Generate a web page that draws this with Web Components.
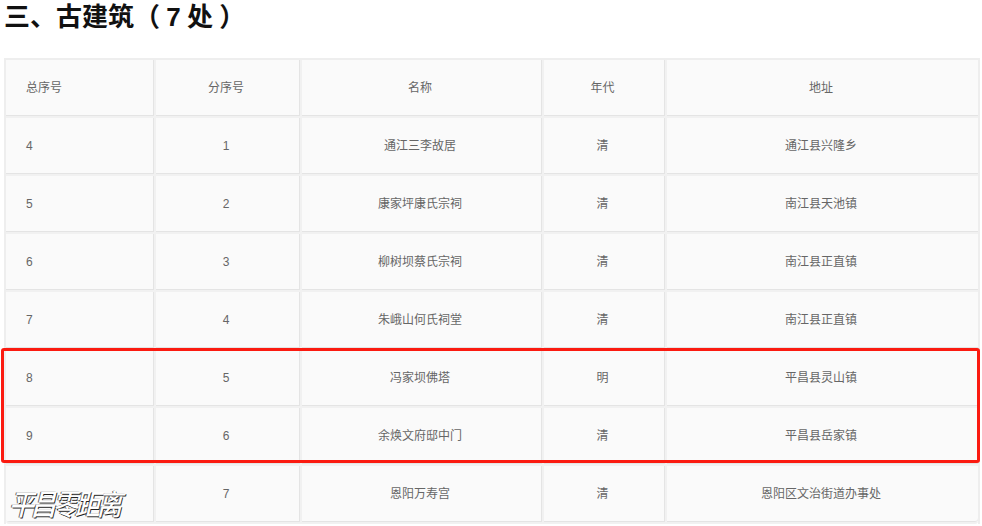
<!DOCTYPE html>
<html lang="zh">
<head>
<meta charset="utf-8">
<title>古建筑</title>
<style>
  html, body { margin: 0; padding: 0; background: #fff; overflow: hidden; height: 526px; }
  body { font-family: "Liberation Sans", "Noto Sans CJK SC", sans-serif; }
</style>
</head>
<body>
<relic-section>
  <span slot="title">三、古建筑（ 7 处 ）</span>
  <relic-table></relic-table>
</relic-section>
<script>
// Rows of the listing: total no., sub no., name, era, address
const RELICS = [
  ["4", "1", "通江三李故居", "清", "通江县兴隆乡"],
  ["5", "2", "康家坪康氏宗祠", "清", "南江县天池镇"],
  ["6", "3", "柳树坝蔡氏宗祠", "清", "南江县正直镇"],
  ["7", "4", "朱峨山何氏祠堂", "清", "南江县正直镇"],
  ["8", "5", "冯家坝佛塔", "明", "平昌县灵山镇"],
  ["9", "6", "余焕文府邸中门", "清", "平昌县岳家镇"],
  ["", "7", "恩阳万寿宫", "清", "恩阳区文治街道办事处"],
];

class RelicSection extends HTMLElement {
  constructor() {
    super();
    this.attachShadow({ mode: "open" });
    this.shadowRoot.innerHTML = `
      <style>
        :host { display: block; position: relative; height: 526px; overflow: hidden; }
        h2 {
          margin: 0;
          padding: 0 0 0 4px;
          height: 58px;
          box-sizing: border-box;
          font: bold 26px/34px "Liberation Sans", "Noto Sans CJK SC", sans-serif;
          color: #111;
          word-spacing: -1px;
          white-space: pre;
        }
        .body { padding: 0 2px 0 4px; }
      </style>
      <h2><slot name="title"></slot></h2>
      <div class="body"><slot></slot></div>
    `;
  }
}

class RelicTable extends HTMLElement {
  constructor() {
    super();
    this.attachShadow({ mode: "open" });
  }

  connectedCallback() {
    const head = ["总序号", "分序号", "名称", "年代", "地址"];
    const cells = (row, tag) =>
      row.map((text) => `<${tag}>${text}</${tag}>`).join("");

    this.shadowRoot.innerHTML = `
      <style>
        :host { display: block; position: relative; }
        table {
          width: 976px;
          table-layout: fixed;
          border-collapse: separate;
          border-spacing: 0;
          border: 1px solid #eee;
          border-width: 2px 2px 0 2px;
          font: 12px/18px "Liberation Sans", "Noto Sans CJK SC", sans-serif;
          color: #666;
        }
        th, td {
          height: 58px;
          box-sizing: border-box;
          padding: 0 4px 0 0;
          background: #fafafa;
          border-right: 2px solid #f1f1f1;
          border-bottom: 2px solid #f1f1f1;
          box-shadow: inset -1px -1px 0 #e4e4e4;
          text-align: center;
          font-weight: normal;
        }
        th:last-child, td:last-child {
          padding-right: 3px;
          border-right: 0;
          box-shadow: inset 0 -1px 0 #e4e4e4;
        }
        th:first-child, td:first-child { text-align: left; padding-left: 20px; }
        tbody tr:last-child td:first-child { border-bottom-left-radius: 3px; }
        tbody tr:last-child td:last-child { border-bottom-right-radius: 3px; }
      </style>
      <table>
        <colgroup>
          <col style="width:150px"><col style="width:146px"><col style="width:242px">
          <col style="width:123px"><col>
        </colgroup>
        <thead><tr>${cells(head, "th")}</tr></thead>
        <tbody>
          ${RELICS.map((row) => `<tr>${cells(row, "td")}</tr>`).join("")}
        </tbody>
      </table>
      <highlight-box></highlight-box>
      <site-watermark>平昌零距离</site-watermark>
    `;
  }
}

// Red annotation drawn over rows 8 and 9
class HighlightBox extends HTMLElement {
  constructor() {
    super();
    this.attachShadow({ mode: "open" });
    this.shadowRoot.innerHTML = `
      <style>
        :host {
          position: absolute;
          left: -3px;
          top: 290px;
          width: 979px;
          height: 115px;
          box-sizing: border-box;
          border: 3px solid #fb1a10;
          border-radius: 3px;
        }
      </style>
    `;
  }
}

class SiteWatermark extends HTMLElement {
  constructor() {
    super();
    this.attachShadow({ mode: "open" });
    this.shadowRoot.innerHTML = `
      <style>
        :host {
          position: absolute;
          left: 8px;
          top: 428px;
          font: 500 25px/32px "Noto Sans CJK SC", sans-serif;
          color: #fff;
          letter-spacing: -3px;
          text-shadow: 1px 1px 0 #222, -1px 0 0 #666;
          transform: skewX(-14deg) scaleY(1.15);
          white-space: nowrap;
        }
      </style>
      <slot></slot>
    `;
  }
}

customElements.define("relic-section", RelicSection);
customElements.define("relic-table", RelicTable);
customElements.define("highlight-box", HighlightBox);
customElements.define("site-watermark", SiteWatermark);
</script>
</body>
</html>
